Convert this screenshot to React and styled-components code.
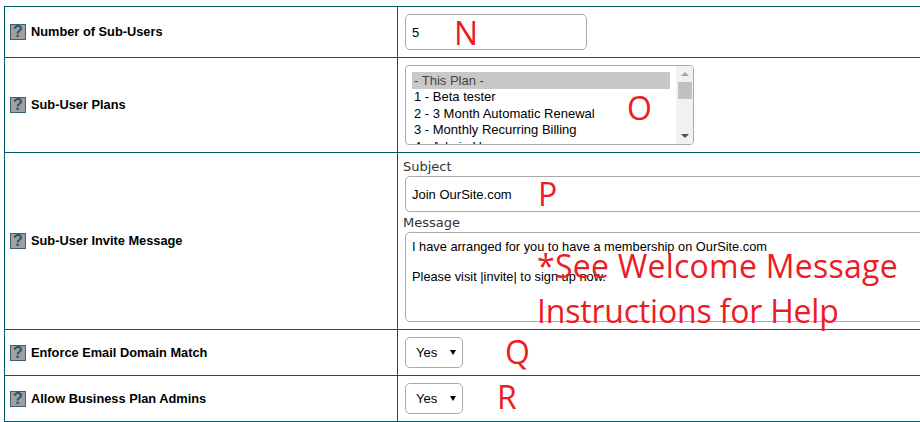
import React from 'react';
import styled, { createGlobalStyle } from 'styled-components';

const GlobalStyle = createGlobalStyle`
  html, body {
    margin:0;
    padding:0;
    background:#fff;
  }
  body {
    width:920px;
    height:422px;
    overflow:hidden;
    font-family:"Liberation Sans", Arial, sans-serif;
  }
`;

const StTable = styled.div`
  width:1000px;
  margin:6px 0 0 4px;
  border-top:1px solid #005a6b;
  border-left:1px solid #005a6b;
  box-sizing:content-box;
`;
const StRow = styled.div`
  display:grid;
  grid-template-columns:393px 1fr;
  height:${(props) => props.$height}px;
  box-sizing:border-box;
  border-bottom:1px solid #005a6b;
`;
const StLabelCell = styled.div`
  display:flex;
  align-items:center;
  gap:5px;
  padding-left:5px;
  border-right:1px solid #005a6b;
  box-sizing:border-box;
  font-size:12.8px;
  font-weight:700;
  color:#000;
`;
const StLabelText = styled.span`
  margin-bottom:${(props) => (props.$lift ? 2 : 0)}px;
`;
const StHelpIcon = styled.span`
  flex:none;
  display:flex;
  justify-content:center;
  align-items:center;
  width:16px;
  height:16px;
  box-sizing:border-box;
  border:1px solid #3b6272;
  background-color:#a0a0a0;
  color:#2a5566;
  font-size:16px;
  line-height:14px;
  font-weight:700;
`;
const StFieldCell = styled.div`
  position:relative;
  display:flex;
  flex-direction:column;
  align-items:flex-start;
  justify-content:${(props) => (props.$stack ? 'flex-start' : 'center')};
  padding-left:7px;
  box-sizing:border-box;
`;
const StCaption = styled.label`
  margin:${(props) => props.$margin};
  margin-left:-2px;
  font-family:"DejaVu Sans", Verdana, sans-serif;
  font-size:13px;
  line-height:16px;
  color:#333;
`;
const StInput = styled.input`
  display:block;
  width:${(props) => props.$width}px;
  height:${(props) => props.$height}px;
  padding:0 6px;
  box-sizing:border-box;
  border:1px solid #aaa;
  border-radius:5px;
  outline:none;
  background:#fff;
  font-family:"Liberation Sans", Arial, sans-serif;
  font-size:13px;
  color:#000;
`;
const StTextarea = styled.textarea`
  display:block;
  width:600px;
  height:90px;
  padding:6px;
  box-sizing:border-box;
  border:1px solid #aaa;
  border-radius:5px;
  outline:none;
  resize:none;
  overflow:hidden;
  font-family:"Liberation Sans", Arial, sans-serif;
  font-size:12.8px;
  line-height:15px;
  color:#000;
`;
const StListBox = styled.div`
  display:flex;
  width:289px;
  height:80px;
  box-sizing:border-box;
  border:1px solid #aaa;
  border-radius:4px;
  overflow:hidden;
  background:#fff;
`;
const StOptions = styled.ul`
  flex:1;
  list-style:none;
  margin:0;
  padding:6px 6px 0;
  overflow:hidden;
  font-size:13px;
`;
const StOption = styled.li`
  height:${(props) => (props.$selected ? 17 : 16.5)}px;
  line-height:${(props) => (props.$selected ? 17 : 15.5)}px;
  padding-left:2px;
  white-space:nowrap;
  background-color:${(props) => (props.$selected ? '#c8c8c8' : 'transparent')};
  color:${(props) => (props.$selected ? '#444' : '#000')};
`;
const StScrollbar = styled.div`
  flex:none;
  display:flex;
  flex-direction:column;
  align-items:center;
  width:17px;
  background-color:#f1f1f1;
`;
const StArrow = styled.span`
  flex:none;
  margin:${(props) => (props.$up ? '6px 0 0' : 'auto 0 6px')};
  border-left:4px solid transparent;
  border-right:4px solid transparent;
  border-${(props) => (props.$up ? 'bottom' : 'top')}:4px solid ${(props) => (props.$up ? '#a3a3a3' : '#505050')};
`;
const StThumb = styled.span`
  flex:none;
  width:14px;
  height:17px;
  margin-top:6px;
  background-color:#c1c1c1;
`;
const StSelectWrap = styled.span`
  position:relative;
  display:block;
  width:58px;
  height:31px;
  &::after {
    content:'';
    position:absolute;
    top:13px;
    right:7px;
    border-left:3px solid transparent;
    border-right:3px solid transparent;
    border-top:5px solid #000;
    pointer-events:none;
  }
`;
const StSelect = styled.select`
  appearance:none;
  display:block;
  width:100%;
  height:100%;
  padding:0 0 0 10px;
  box-sizing:border-box;
  border:1px solid #aaa;
  border-radius:5px;
  outline:none;
  background:#fff;
  font-family:"Liberation Sans", Arial, sans-serif;
  font-size:13px;
  color:#000;
`;
const StMark = styled.span`
  position:absolute;
  left:${(props) => props.$x}px;
  top:${(props) => props.$y}px;
  font-family:"Open Sans", sans-serif;
  font-size:32px;
  line-height:45px;
  letter-spacing:${(props) => props.$spacing || 0}px;
  color:#ed1c24;
  white-space:nowrap;
  pointer-events:none;
`;

const plans = ['1 - Beta tester', '2 - 3 Month Automatic Renewal', '3 - Monthly Recurring Billing', '4 - Admin Use'];

const LabelCell = ({ lift, children }) => (
  <StLabelCell>
    <StHelpIcon>?</StHelpIcon>
    <StLabelText $lift={lift}>{children}</StLabelText>
  </StLabelCell>
);

const YesSelect = () => (
  <StSelectWrap>
    <StSelect defaultValue="Yes">
      <option>Yes</option>
      <option>No</option>
    </StSelect>
  </StSelectWrap>
);

const App = () => (
  <>
    <GlobalStyle />
    <StTable>
      <StRow $height={51}>
        <LabelCell lift>Number of Sub-Users</LabelCell>
        <StFieldCell>
          <StInput $width={182} $height={36} defaultValue="5" />
          <StMark $x={56} $y={3}>N</StMark>
        </StFieldCell>
      </StRow>
      <StRow $height={95}>
        <LabelCell lift>Sub-User Plans</LabelCell>
        <StFieldCell>
          <StListBox>
            <StOptions>
              <StOption $selected>- This Plan -</StOption>
              {plans.map((plan) => <StOption key={plan}>{plan}</StOption>)}
            </StOptions>
            <StScrollbar>
              <StArrow $up />
              <StThumb />
              <StArrow />
            </StScrollbar>
          </StListBox>
          <StMark $x={229} $y={27}>O</StMark>
        </StFieldCell>
      </StRow>
      <StRow $height={177}>
        <LabelCell lift>Sub-User Invite Message</LabelCell>
        <StFieldCell $stack>
          <StCaption $margin="6px 0 1px">Subject</StCaption>
          <StInput $width={600} $height={36} defaultValue="Join OurSite.com" />
          <StCaption $margin="3px 0 1px">Message</StCaption>
          <StTextarea defaultValue={'I have arranged for you to have a membership on OurSite.com\n\nPlease visit |invite| to sign up now.'} />
          <StMark $x={140} $y={18}>P</StMark>
          <StMark $x={139} $y={90} $spacing={0.25}>*See Welcome Message</StMark>
          <StMark $x={139} $y={135} $spacing={-0.2}>Instructions for Help</StMark>
        </StFieldCell>
      </StRow>
      <StRow $height={46}>
        <LabelCell>Enforce Email Domain Match</LabelCell>
        <StFieldCell>
          <YesSelect />
          <StMark $x={107} $y={-1}>Q</StMark>
        </StFieldCell>
      </StRow>
      <StRow $height={46}>
        <LabelCell>Allow Business Plan Admins</LabelCell>
        <StFieldCell>
          <YesSelect />
          <StMark $x={99} $y={-2}>R</StMark>
        </StFieldCell>
      </StRow>
    </StTable>
  </>
);

export default App;
